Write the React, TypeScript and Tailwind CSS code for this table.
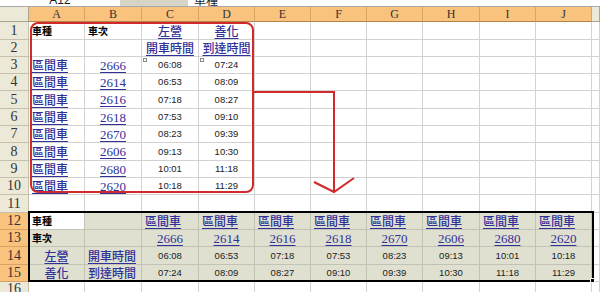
import React from 'react';
import cx from 'clsx';

const COLS = ['A', 'B', 'C', 'D', 'E', 'F', 'G', 'H', 'I', 'J', ''];

const trains = [
  ['2666', '06:08', '07:24'],
  ['2614', '06:53', '08:09'],
  ['2616', '07:18', '08:27'],
  ['2618', '07:53', '09:10'],
  ['2670', '08:23', '09:39'],
  ['2606', '09:13', '10:30'],
  ['2680', '10:01', '11:18'],
  ['2620', '10:18', '11:29'],
];

const cjk = "font-['Noto_Sans_CJK_TC','Noto_Sans_CJK_SC',sans-serif]";

const Link = ({ children, num }: { children: React.ReactNode; num?: boolean }) => (
  <span
    className={cx(
      'text-[#31319a] underline decoration-1 underline-offset-[2px] leading-none',
      num ? "font-['Liberation_Serif',serif] text-[13px]" : cx(cjk, 'text-[12px] font-medium'),
    )}
  >
    {children}
  </span>
);

const Bold = ({ children }: { children: React.ReactNode }) => (
  <span className={cx(cjk, 'text-[10px] font-bold text-black leading-none')}>{children}</span>
);

const Time = ({ children }: { children: React.ReactNode }) => (
  <span className="font-['Liberation_Sans',sans-serif] text-[9.5px] text-[#222] leading-none">{children}</span>
);

const Marker = () => (
  <span className="absolute left-[1px] top-[1px] w-[4px] h-[4px] border border-[#888] bg-white" />
);

type CellDef = { node?: React.ReactNode; align?: 'left' | 'center'; bg?: string; marker?: boolean };

const cellFor = (r: number, c: number): CellDef => {
  const lower = r >= 12 && r <= 15 && c <= 9;
  const bg = lower ? (r === 12 && c === 0 ? 'bg-white' : 'bg-[#dfe0d0]') : 'bg-white';
  if (r === 1) {
    if (c === 0) return { node: <Bold>車種</Bold>, bg };
    if (c === 1) return { node: <Bold>車次</Bold>, bg };
    if (c === 2) return { node: <Link>左營</Link>, align: 'center', bg };
    if (c === 3) return { node: <Link>善化</Link>, align: 'center', bg };
  }
  if (r === 2) {
    if (c === 2) return { node: <Link>開車時間</Link>, align: 'center', bg };
    if (c === 3) return { node: <Link>到達時間</Link>, align: 'center', bg };
  }
  if (r >= 3 && r <= 10) {
    const t = trains[r - 3];
    if (c === 0) return { node: <Link>區間車</Link>, bg };
    if (c === 1) return { node: <Link num>{t[0]}</Link>, align: 'center', bg };
    if (c === 2) return { node: <Time>{t[1]}</Time>, align: 'center', bg, marker: r === 3 };
    if (c === 3) return { node: <Time>{t[2]}</Time>, align: 'center', bg, marker: r === 3 };
  }
  if (lower) {
    const t = c >= 2 ? trains[c - 2] : null;
    if (r === 12) {
      if (c === 0) return { node: <Bold>車種</Bold>, bg };
      if (t) return { node: <Link>區間車</Link>, bg };
    }
    if (r === 13) {
      if (c === 0) return { node: <Bold>車次</Bold>, bg };
      if (t) return { node: <Link num>{t[0]}</Link>, align: 'center', bg };
    }
    if (r === 14) {
      if (c === 0) return { node: <Link>左營</Link>, align: 'center', bg };
      if (c === 1) return { node: <Link>開車時間</Link>, bg };
      if (t) return { node: <Time>{t[1]}</Time>, align: 'center', bg };
    }
    if (r === 15) {
      if (c === 0) return { node: <Link>善化</Link>, align: 'center', bg };
      if (c === 1) return { node: <Link>到達時間</Link>, bg };
      if (t) return { node: <Time>{t[2]}</Time>, align: 'center', bg };
    }
  }
  return { bg };
};

const rows = Array.from({ length: 16 }, (_, i) => i + 1);

const App = () => {
  return (
    <div className="w-[600px] h-[292px] overflow-hidden bg-white relative select-none">
      {/* formula bar, mostly scrolled off */}
      <div className="h-[7px] flex border-b border-[#a8a8a8] overflow-hidden">
        <div className="w-[120px] flex justify-center">
          <span className="font-['Liberation_Sans',sans-serif] text-[12px] leading-[12px] mt-[-6px] text-[#222]">A12</span>
        </div>
        <div className="w-[68px] bg-[#d6d4c4]" />
        <div className="flex-1 pl-[6px]">
          <span className={cx(cjk, 'text-[12px] leading-[12px] block mt-[-6px] text-[#222]')}>車種</span>
        </div>
      </div>

      <div className="grid grid-cols-[29px_56px_57px_57px_56px_56px_56px_56px_57px_56px_56px_1fr] grid-rows-[15px_18px_17px_17px_17px_18px_17px_17px_18px_17px_17px_18px_17px_17px_18px_17px_1fr]">
        {/* column headers */}
        <div className="bg-[#ece9d8] border-r border-b border-[#a9a590]" />
        {COLS.map((c, i) => (
          <div
            key={c + i}
            className={cx(
              'flex items-center justify-center border-r border-b font-[\'Liberation_Serif\',serif] text-[12px] text-[#333]',
              i < 10 ? 'bg-[#f9c37e] border-r-[#d8a463] border-b-[#b48548]' : 'bg-[#ece9d8] border-[#a9a590]',
            )}
          >
            {c}
          </div>
        ))}

        {rows.map((r) => (
          <React.Fragment key={r}>
            <div
              className={cx(
                'flex items-center justify-center border-r border-b font-[\'Liberation_Serif\',serif] text-[14px] leading-none text-[#333]',
                r >= 12 && r <= 15 ? 'bg-[#f9c37e] border-[#d8a463]' : 'bg-[#ece9d8] border-[#c4c0ab]',
              )}
            >
              {r}
            </div>
            {COLS.map((_, c) => {
              const cell = cellFor(r, c);
              const lower = r >= 12 && r <= 15 && c <= 9;
              return (
                <div
                  key={c}
                  className={cx(
                    'relative flex items-center overflow-hidden whitespace-nowrap border-r border-b',
                    cell.align === 'center' ? 'justify-center px-[2px]' : 'justify-start pl-[3px]',
                    lower ? 'border-[#c2c3b4]' : 'border-[#d2d2d2]',
                    cell.bg,
                  )}
                >
                  {cell.marker ? <Marker /> : null}
                  {cell.node}
                </div>
              );
            })}
          </React.Fragment>
        ))}
      </div>

      {/* selection outline + fill handle */}
      <div className="absolute left-[28px] top-[211px] w-[566px] h-[71px] border-2 border-black pointer-events-none" />
      <div className="absolute left-[590px] top-[278px] w-[5px] h-[5px] bg-black border border-white" />

      {/* red annotation */}
      <svg className="absolute inset-0 pointer-events-none" width="600" height="292" viewBox="0 0 600 292">
        <rect x="31" y="23" width="222" height="169" rx="7" fill="none" stroke="#d02a2a" strokeWidth="2" />
        <polyline points="253,92 334,92 334,191" fill="none" stroke="#d02a2a" strokeWidth="2" />
        <polyline points="314,182 334,192 354,178" fill="none" stroke="#d02a2a" strokeWidth="2" />
      </svg>
    </div>
  );
};

export default App;
